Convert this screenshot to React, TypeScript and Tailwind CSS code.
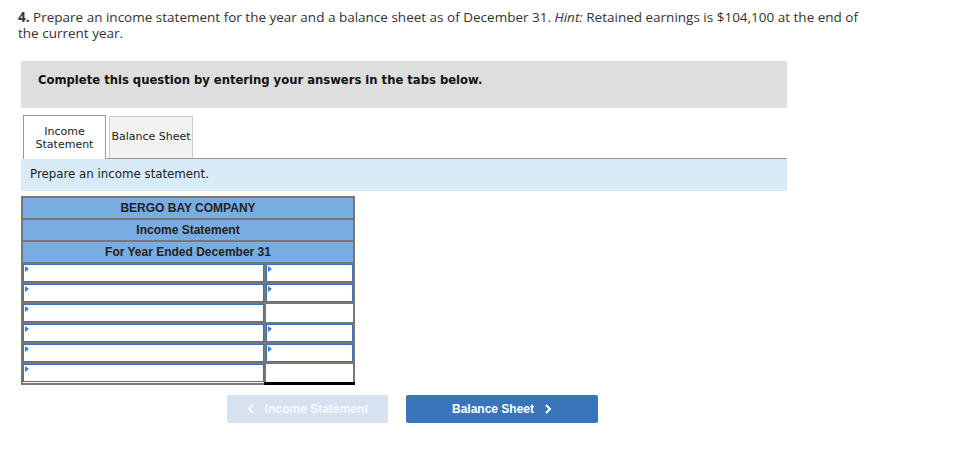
import React from "react";

const ROWS = [
  { right: "input" },
  { right: "input" },
  { right: "total" },
  { right: "input" },
  { right: "input" },
  { right: "grand" },
];

function Marker() {
  return (
    <span className="absolute left-[1px] top-[1px] h-0 w-0 border-y-[3px] border-l-[4px] border-y-transparent border-l-[#3f7cc8]" />
  );
}

function InputCell() {
  return (
    <div className="relative h-[18px] border border-[#3d70b5] bg-white">
      <Marker />
    </div>
  );
}

export default function App() {
  return (
    <div className="min-h-screen w-[979px] bg-white text-[#222]">
      <p
        className="w-[864px] pl-[18px] pt-[9px] text-[13.5px] leading-[16px] text-[#333]"
        style={{ fontFamily: "'Open Sans', Lato, sans-serif" }}
      >
        <b>4.</b> Prepare an income statement for the year and a balance sheet as of December 31.{" "}
        <i>Hint:</i> Retained earnings is $104,100 at the end of the current year.
      </p>

      <div className="ml-[21px] mt-[20px] w-[766px]" style={{ fontFamily: "'DejaVu Sans', Verdana, sans-serif" }}>
        <div className="flex h-[47px] items-start bg-[#dedede] pl-[17px] pt-[11px]">
          <span className="text-[11.6px] font-bold text-[#111]">
            Complete this question by entering your answers in the tabs below.
          </span>
        </div>

        <div className="mt-[7px] flex items-end">
          <div className="ml-[2px] flex h-[44px] w-[83px] flex-col items-center justify-center border-x border-t border-[#999] bg-white pt-[1px] text-[11px] leading-[13px] text-[#222]">
            <span>Income</span>
            <span>Statement</span>
          </div>
          <div className="flex flex-1 items-end border-b border-[#999]">
            <div className="ml-[3px] flex h-[42px] w-[84px] items-center justify-center border-x border-t border-[#ccc] bg-[#f2f2f2] text-[11px] text-[#222]">
              Balance Sheet
            </div>
          </div>
        </div>

        <div className="flex h-[32px] items-center bg-[#daebf8] pl-[9px] text-[11.8px] text-[#222]">
          Prepare an income statement.
        </div>

        <table
          className="mt-[5px] w-[334px] border-collapse"
          style={{ fontFamily: "'Liberation Sans', Arial, sans-serif" }}
        >
          <tbody>
            {["BERGO BAY COMPANY", "Income Statement", "For Year Ended December 31"].map((t) => (
              <tr key={t}>
                <td
                  colSpan={2}
                  className="h-[22px] border-2 border-[#777] bg-[#78ade4] p-0 text-center text-[12px] font-bold leading-none text-[#222]"
                >
                  {t}
                </td>
              </tr>
            ))}
            {ROWS.map((r, i) => (
              <tr key={i}>
                <td className="w-[243px] border-2 border-[#777] p-0">
                  <InputCell />
                </td>
                {r.right === "input" && (
                  <td className="border-2 border-[#777] p-0">
                    <InputCell />
                  </td>
                )}
                {r.right === "total" && (
                  <td className="border-2 border-[#777] border-t-black p-0 [border-top-width:1px]">
                    <div className="h-[18px] bg-white" />
                  </td>
                )}
                {r.right === "grand" && (
                  <td className="border-2 border-[#777] border-b-[3px] border-b-black border-t-black p-0 [border-top-width:1px]">
                    <div className="h-[18px] bg-white" />
                  </td>
                )}
              </tr>
            ))}
          </tbody>
        </table>

        <div
          className="ml-[206px] mt-[10px] flex gap-[18px] text-[12px] font-bold"
          style={{ fontFamily: "'Liberation Sans', Arial, sans-serif" }}
        >
          <button className="flex h-[28px] w-[161px] items-center justify-center gap-[10px] rounded-[2px] bg-[#d6e2f0] text-[#f7f9fc]">
            <svg width="8" height="10" viewBox="0 0 8 10" fill="none">
              <path d="M6 1 2 5l4 4" stroke="currentColor" strokeWidth="2" />
            </svg>
            Income Statement
          </button>
          <button className="flex h-[28px] w-[192px] items-center justify-center gap-[10px] rounded-[2px] bg-[#3a75b9] text-white">
            Balance Sheet
            <svg width="8" height="10" viewBox="0 0 8 10" fill="none">
              <path d="M2 1l4 4-4 4" stroke="currentColor" strokeWidth="2" />
            </svg>
          </button>
        </div>
      </div>
    </div>
  );
}
